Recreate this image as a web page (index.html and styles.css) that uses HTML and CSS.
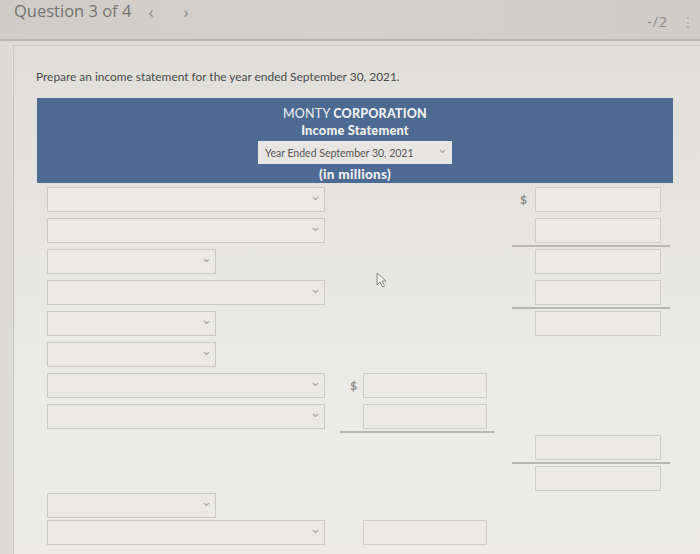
FILE: index.html
```html
<!DOCTYPE html>
<html>
<head>
<meta charset="utf-8">
<link rel="stylesheet" href="styles.css">
</head>
<body>
<header class="topbar">
  <div class="qnav">
    <span class="qtitle">Question 3 of 4</span>
    <span class="arrow prev">&lsaquo;</span>
    <span class="arrow next">&rsaquo;</span>
  </div>
  <div class="score">
    <span class="points">-/2</span>
    <span class="dots">&#8942;</span>
  </div>
</header>
<main class="card">
  <p class="prompt">Prepare an income statement for the year ended September 30, 2021.</p>
  <section class="stmt-head">
    <div class="company"><span class="light">MONTY</span> <b>CORPORATION</b></div>
    <div class="title">Income Statement</div>
    <div class="period-select"><span>Year Ended September 30, 2021</span><span class="chev">&#8964;</span></div>
    <div class="units">(in millions)</div>
  </section>

  <div class="grid">
    <!-- row 1 -->
    <div class="c1"><div class="sel wide"><span class="chev">&#8964;</span></div></div>
    <div class="c2"></div>
    <div class="c3"><span class="dollar">$</span><div class="inp"></div></div>
    <!-- row 2 -->
    <div class="c1"><div class="sel wide"><span class="chev">&#8964;</span></div></div>
    <div class="c2"></div>
    <div class="c3 ul"><span class="dollar"></span><div class="inp"></div></div>
    <!-- row 3 -->
    <div class="c1"><div class="sel narrow"><span class="chev">&#8964;</span></div></div>
    <div class="c2"></div>
    <div class="c3"><span class="dollar"></span><div class="inp"></div></div>
    <!-- row 4 -->
    <div class="c1"><div class="sel wide"><span class="chev">&#8964;</span></div></div>
    <div class="c2"></div>
    <div class="c3 ul"><span class="dollar"></span><div class="inp"></div></div>
    <!-- row 5 -->
    <div class="c1"><div class="sel narrow"><span class="chev">&#8964;</span></div></div>
    <div class="c2"></div>
    <div class="c3"><span class="dollar"></span><div class="inp"></div></div>
    <!-- row 6 -->
    <div class="c1"><div class="sel narrow"><span class="chev">&#8964;</span></div></div>
    <div class="c2"></div>
    <div class="c3"></div>
    <!-- row 7 -->
    <div class="c1"><div class="sel wide"><span class="chev">&#8964;</span></div></div>
    <div class="c2"><span class="dollar">$</span><div class="inp"></div></div>
    <div class="c3"></div>
    <!-- row 8 -->
    <div class="c1"><div class="sel wide"><span class="chev">&#8964;</span></div></div>
    <div class="c2 ul"><span class="dollar"></span><div class="inp"></div></div>
    <div class="c3"></div>
    <!-- row 9 -->
    <div class="c1"></div>
    <div class="c2"></div>
    <div class="c3 ul"><span class="dollar"></span><div class="inp"></div></div>
    <!-- row 10 -->
    <div class="c1"></div>
    <div class="c2"></div>
    <div class="c3"><span class="dollar"></span><div class="inp"></div></div>
    <!-- row 11 -->
    <div class="c1"><div class="sel narrow"><span class="chev">&#8964;</span></div></div>
    <div class="c2"></div>
    <div class="c3"></div>
    <!-- row 12 -->
    <div class="c1"><div class="sel wide"><span class="chev">&#8964;</span></div></div>
    <div class="c2"><span class="dollar"></span><div class="inp"></div></div>
    <div class="c3"></div>
  </div>

  <svg class="cursor" width="12" height="16" viewBox="0 0 12 16"><path d="M1 1 L1 13 L4 10 L6.5 15 L8.5 14 L6 9 L10 9 Z" fill="#f2f2f0" stroke="#8a8a88" stroke-width="1"/></svg>
</main>
</body>
</html>
```

FILE: styles.css
```css
html, body {
  margin: 0;
  padding: 0;
}
body {
  width: 700px;
  height: 554px;
  overflow: hidden;
  background: #dcdbd5;
  font-family: Lato, "Open Sans", "Liberation Sans", sans-serif;
  position: relative;
}
.topbar {
  height: 41px;
  box-sizing: border-box;
  background: linear-gradient(90deg, #cfcdc6 0%, #d3d1ca 50%, #cfccc6 100%);
  border-bottom: 2px solid #b9b6b0;
  display: flex;
  justify-content: space-between;
  align-items: flex-start;
  padding: 1px 0 0 14px;
}
.qnav {
  display: flex;
  align-items: flex-start;
  height: 22px;
}
.qtitle {
  font-family: "Open Sans", Lato, sans-serif;
  font-size: 16.5px;
  line-height: 20px;
  color: #747370;
}
.arrow {
  font-family: "Open Sans", sans-serif;
  font-size: 17px;
  line-height: 22px;
  height: 22px;
  color: #8e8d8a;
}
.prev { margin-left: 17px; }
.next { margin-left: 30px; }
.score {
  display: flex;
  align-items: center;
  padding-top: 11px;
  padding-right: 5px;
}
.points {
  font-family: "Open Sans", sans-serif;
  font-size: 14px;
  color: #8b8a86;
  letter-spacing: 1px;
}
.dots {
  margin-left: 13px;
  font-family: "DejaVu Sans", sans-serif;
  font-size: 14px;
  color: #a8a6a0;
}
.card {
  margin: 4px 0 0 13px;
  height: 520px;
  border-left: 1px solid #c9c7c1;
  border-top: 1px solid #cdcbc5;
  background: linear-gradient(180deg, #dfded9 0%, #e6e5e1 35%, #ebebe8 70%, #ecebe9 100%);
  position: relative;
}
.prompt {
  margin: 0;
  padding: 23px 0 0 22px;
  font-size: 11.9px;
  line-height: 16px;
  color: #4a4a4a;
}
.stmt-head {
  margin: 13px 0 0 23px;
  width: 636px;
  height: 85px;
  box-sizing: border-box;
  background: #4d6a93;
  display: flex;
  flex-direction: column;
  align-items: center;
  padding-top: 8px;
  color: #f1f1f1;
}
.company {
  font-size: 12.5px;
  line-height: 16px;
  letter-spacing: 0.2px;
}
.company .light { font-weight: 400; }
.company b { font-weight: 900; }
.title {
  font-size: 12.8px;
  font-weight: 900;
  line-height: 16px;
  letter-spacing: 0.2px;
}
.period-select {
  margin-top: 3px;
  width: 194px;
  height: 25px;
  box-sizing: border-box;
  background: #e8e6e2;
  display: flex;
  justify-content: space-between;
  align-items: center;
  padding: 0 4px 0 7px;
  font-size: 10.5px;
  color: #555;
}
.chev {
  font-family: "DejaVu Sans", sans-serif;
  font-size: 13px;
  line-height: 13px;
  height: 13px;
  color: #a7a5a0;
  margin-top: -9px;
}
.units {
  font-size: 13.5px;
  font-weight: 900;
  line-height: 17px;
  margin-top: 2px;
  letter-spacing: 0.3px;
}
.grid {
  margin: 4px 0 0 33px;
  display: grid;
  grid-template-columns: 293px 160px 170px;
  grid-template-rows: repeat(9, 25px) 21px 21px 25px;
  row-gap: 6px;
}
.grid > div {
  display: flex;
  align-items: flex-start;
  box-sizing: border-box;
}
.sel {
  height: 25px;
  box-sizing: border-box;
  border: 1px solid #cbc9c4;
  background: #eae9e6;
  display: flex;
  justify-content: flex-end;
  align-items: center;
  padding-right: 3px;
}
.sel.wide { width: 278px; }
.sel.narrow { width: 169px; }
.c2 { padding-left: 4px; }
.c3 { margin-left: 12px; padding-right: 8px; }
.dollar {
  width: 23px;
  height: 25px;
  font-size: 12px;
  font-weight: 700;
  color: #8c8b88;
  display: flex;
  align-items: center;
  justify-content: center;
}
.c2 .dollar { width: 19px; }
.inp {
  width: 126px;
  height: 25px;
  box-sizing: border-box;
  border: 1px solid #cfcdc8;
  background: #ebeae7;
}
.c2 .inp { width: 124px; }
.ul {
  border-bottom: 2px solid #b8b7b3;
  height: 29px;
  padding-bottom: 2px;
}
.c2.ul { margin-right: 5px; }
.cursor {
  position: absolute;
  left: 362px;
  top: 226px;
}
```
